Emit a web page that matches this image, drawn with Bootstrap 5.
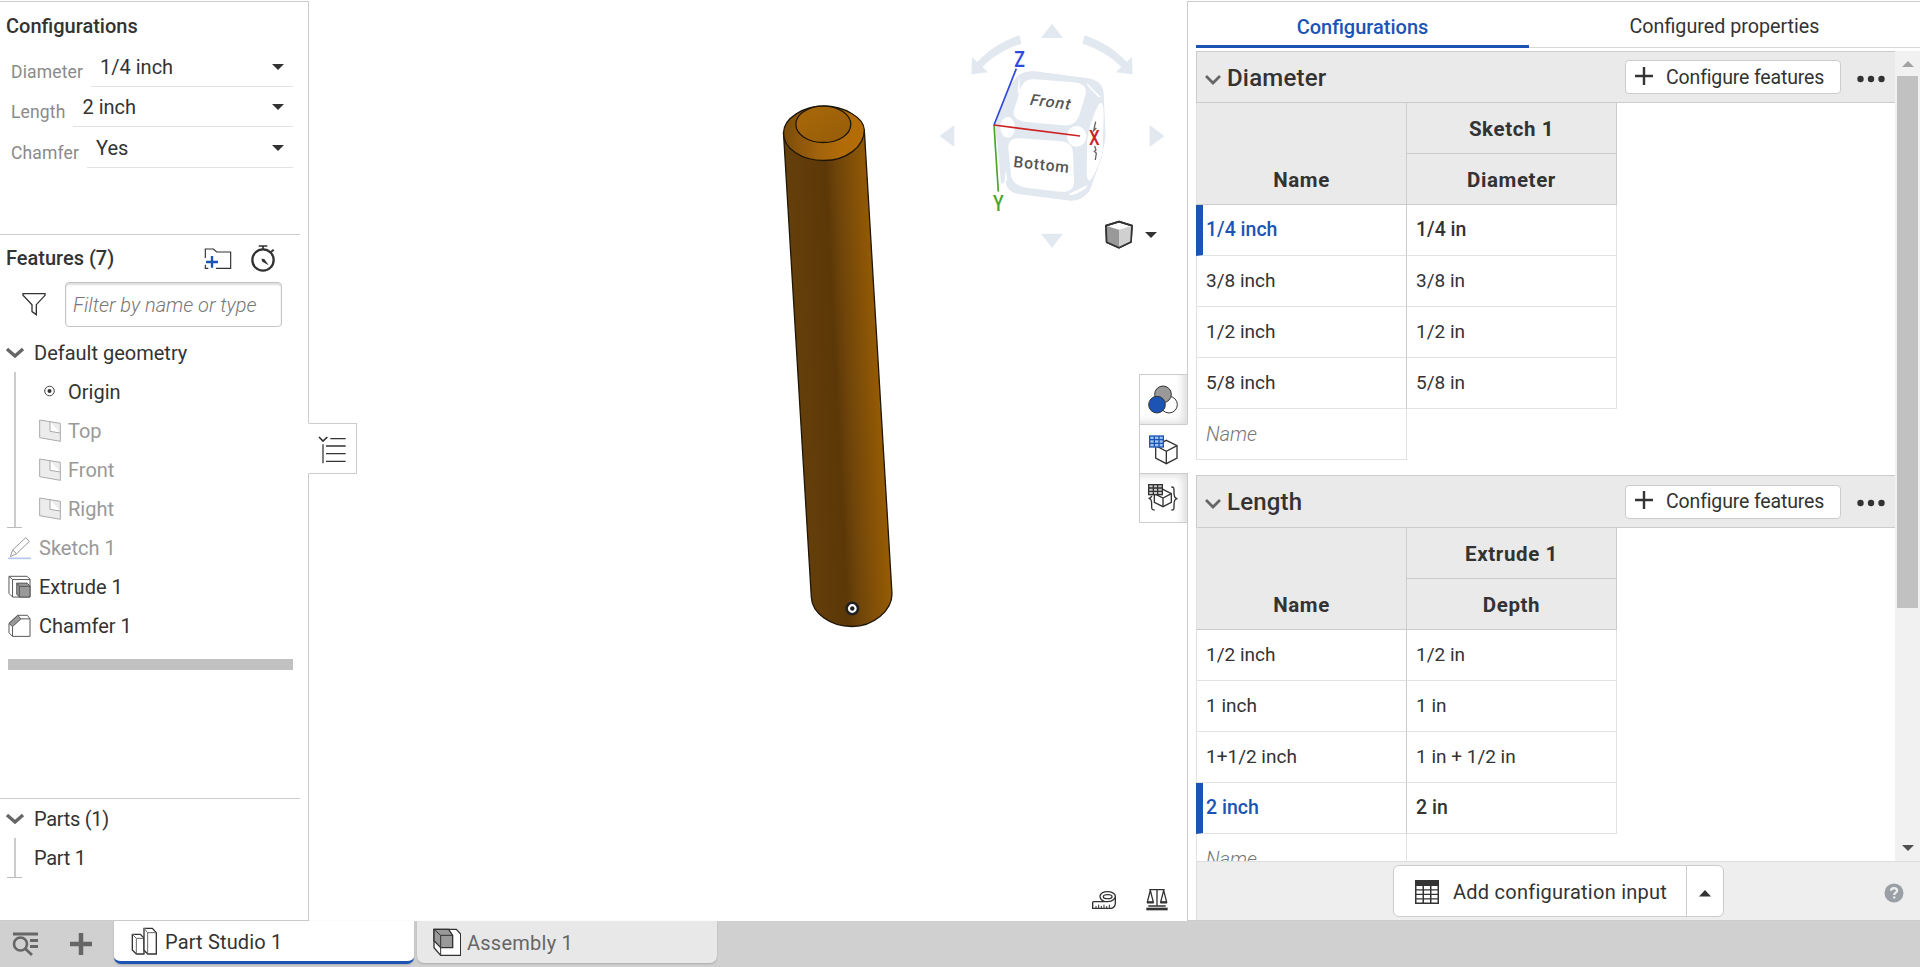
<!DOCTYPE html>
<html lang="en">
<head>
<meta charset="utf-8">
<title>Part Studio 1</title>
<link href="https://cdn.jsdelivr.net/npm/bootstrap@5.3.0/dist/css/bootstrap.min.css" rel="stylesheet">
<script src="https://cdn.jsdelivr.net/npm/bootstrap@5.3.0/dist/js/bootstrap.bundle.min.js"></script>
<style>
:root{--ink:#333;--line:#ccc;--soft:#e2e2e2;--blue:#1b54b5;--muted:#8a8a8a}
body{font-family:Roboto,"Noto Sans",sans-serif;font-size:20px;line-height:26px;color:var(--ink);letter-spacing:0;height:967px;overflow:hidden;background:#fff}
svg{display:block;flex:none}
.app-main{height:921px}
.side{width:309px;border:1px solid var(--line);border-left:0;margin-top:1px;height:920px}
.side .rule{width:300px;border-bottom:1px solid var(--line)}
.cfg-title{height:50px;padding:11px 0 0 6px;font-weight:500}
.cfg-row{padding-left:11px;width:293px}
.cfg-row label{font-size:17.5px;color:var(--muted);line-height:24px;padding-bottom:3px;margin-right:8px;letter-spacing:.15px}
.cfg-row .pick{border-bottom:1px solid var(--soft);padding:0 9px;line-height:24px;height:34px}
.pick span{padding-top:2px}
.caret{width:0;height:0;border:6px solid transparent;border-top-color:#333;border-bottom:0;margin-top:11px}
.feat-head{height:47px;padding-left:6px}
.feat-head .ttl{font-weight:500;width:198px;padding-bottom:2px}
.filter-box{width:217px;height:45px;border:1px solid #c4c4c4;border-radius:4px;box-shadow:inset 0 2px 2px #ddd;padding:9px 7px;font-style:italic;font-weight:300;color:#777;margin-left:19px}
.tree-row{height:39px;display:flex;align-items:center}
.tree-row.grp{padding-left:5px}
.tree-row.grp span{margin-left:9px}
.tree-row.feat{padding-left:8px}
.tree-row.feat span{margin-left:8px}
.tree-row.geo{padding-left:23px}
.tree-row.geo span{margin-left:7px}
.guide{width:2px;background:#ccc;position:relative}
.guide::after{content:"";position:absolute;left:-7px;bottom:0;width:15px;height:1px;background:#bbb}
.off{color:#999}
.rollbar{height:11px;background:#c1c1c1;margin:14px 15px 0 8px}
.stage{width:878px}
.flyout{position:absolute;left:-1px;top:423px;width:49px;height:51px;border:1px solid var(--line);border-left-color:#fff}
.rail{position:absolute;right:-1px;top:374px;width:49px}
.rail div{height:50px;border:1px solid var(--line);border-bottom:0}
.rail div.dim{background:#fff;box-shadow:inset -7px 0 8px -3px #ddd}
.rail div:first-child{box-shadow:inset -7px -5px 8px -3px #ddd}
.rail div:last-child{border-bottom:1px solid var(--line);box-shadow:inset -7px 5px 8px -3px #ddd}
.rail div.on{border-right-color:#fff;height:49px}
.panel{width:733px;margin-top:1px;border-top:1px solid var(--line);border-left:1px solid var(--line);border-bottom:1px solid var(--line);height:920px;padding-left:8px}
.ptab{height:46px;text-align:center;padding-top:12px;line-height:26px;border-bottom:1px solid #d8d8d8;font-size:19.7px}
.ptab.on{width:333px;color:var(--blue);font-weight:500;border-bottom:3px solid var(--blue);font-size:20px}
.scroller{height:810px;overflow:hidden}
.sec{height:52px;background:#eaeaea;border:1px solid var(--line);border-right:0;padding:0 10px 0 8px}
.sec.tall{height:53px;margin-top:15px}
.sec h2{font-size:24px;font-weight:500;line-height:28px;margin:1px 0 0 6px;letter-spacing:.2px}
.sec .chev{margin-top:5px}
.sec .dots{margin:3px 0 0 16px}
.addf{width:216px;height:34px;background:#fff;border:1px solid var(--line);border-radius:4px;padding:0 8px 0 9px;font-size:19.5px;letter-spacing:-.15px}
.addf svg{margin-bottom:3px}
.addf span{margin:1px 0 0 13px}
.grid{border-collapse:separate;border-spacing:0;table-layout:fixed;width:421px}
.grid th,.grid td{height:51px;padding:0 9px;border-right:1px solid var(--soft);border-bottom:1px solid var(--soft);vertical-align:middle;letter-spacing:0;font-size:19px}
.grid td{padding-bottom:1px}
.grid th{background:#eaeaea;border-color:var(--line);text-align:center;font-weight:700;font-size:20.5px;letter-spacing:.6px;padding-top:2px}
.grid th[rowspan]{vertical-align:bottom;padding-bottom:11px}
.grid tr>*:first-child{border-left:1px solid var(--soft)}
.grid tr:nth-child(2)>th{border-left:0}
.grid td:first-child{border-right-color:var(--line)}
.grid tr.sel td{font-weight:500;font-size:19.5px}
.grid tr.sel td:first-child{color:var(--blue);border-left:7px solid var(--blue);padding-left:3px}
.grid tr.blank td:first-child{font-style:italic;font-weight:300;color:#777;border-right-color:var(--soft);padding-top:2px;font-size:19.8px}
.grid tr.blank td:last-child{border:0}
.track{width:25px;background:#f1f1f1}
.thumb{width:21px;height:532px;background:#c1c1c1;margin-top:5px}
.foot{height:59px;background:#eee;border-top:1px solid #ddd;border-left:1px solid #ddd}
.split{width:331px;height:52px;border:1px solid var(--line);border-radius:6px;background:#fff;margin-left:196px}
.split .main-act{padding:2px 0 0 21px;border-right:1px solid #ccc;letter-spacing:.25px}
.split .main-act span{margin-left:14px}
.split .more{width:36px;padding-top:5px}
.tabs{height:46px;background:#d0d0d0;padding-left:12px}
.dtab{width:300px;height:43px;border-radius:0 0 7px 7px;box-shadow:0 1px 2px #aaa;letter-spacing:.15px}
.dtab span{margin-left:6px;padding-top:2px}
.dtab.on{background:#fff;border-bottom:3px solid var(--blue);margin-left:12px;padding-left:17px}
.dtab.idle{background:#e8e8e8;color:#666;margin-left:3px;height:42px;padding-left:16px;letter-spacing:.25px}
</style>
</head>
<body>
<div class="app-main d-flex">
  <aside class="side d-flex flex-column flex-shrink-0">
    <div class="cfg-title">Configurations</div>
    <div class="cfg-row d-flex align-items-end" style="height:35px"><label>Diameter</label><div class="pick flex-grow-1 d-flex justify-content-between"><span>1/4 inch</span><i class="caret"></i></div></div>
    <div class="cfg-row d-flex align-items-end" style="height:40px"><label>Length</label><div class="pick flex-grow-1 d-flex justify-content-between"><span>2 inch</span><i class="caret"></i></div></div>
    <div class="cfg-row d-flex align-items-end" style="height:41px"><label>Chamfer</label><div class="pick flex-grow-1 d-flex justify-content-between"><span>Yes</span><i class="caret"></i></div></div>
    <div class="rule" style="height:67px"></div>
    <div class="feat-head d-flex align-items-center">
      <span class="ttl">Features (7)</span>
      <svg width="28" height="24" viewBox="612 742 84 72" fill="none" stroke="#333" stroke-width="3.500"><path d="M616 775V748H640L650 757H692V806H648M616 795V806H625"/><path d="M636 769V804M618 787H654" stroke="#1b54b5" stroke-width="7"/></svg>
      <svg style="margin-left:18px" width="26" height="29" viewBox="750 733 78 87" fill="none" stroke="#333"><circle cx="789" cy="781" r="32" stroke-width="7"/><path d="M776 739H802M789 739V750" stroke-width="5"/><path d="M812 758L821 750" stroke-width="6"/><path d="M784 777L793 778L806 797L787 786Z" fill="#333" stroke="none"/></svg>
    </div>
    <div class="d-flex align-items-center" style="padding-left:22px">
      <svg width="24" height="25" viewBox="65 877 72 75" fill="none" stroke="#333" stroke-width="4"><path d="M68 882H134V887L108 915V945L95 936V915L68 887Z"/></svg>
      <div class="filter-box">Filter by name or type</div>
    </div>
    <div class="tree-row grp" style="margin-top:6px"><svg width="20" height="12" viewBox="0 0 20 12" fill="none" stroke="#666" stroke-width="3.400"><path d="M2 2L10 9L18 2"/></svg><span>Default geometry</span></div>
    <div class="d-flex" style="padding-left:14px">
      <div class="guide" style="height:156px"></div>
      <div>
        <div class="tree-row" style="padding-left:28px"><svg width="11" height="12" viewBox="0 0 11 12" style="margin-bottom:2px"><circle cx="5.500" cy="6" r="4.800" fill="none" stroke="#444"/><circle cx="5.500" cy="6" r="2" fill="#333"/></svg><span style="margin-left:13px">Origin</span></div>
        <div class="tree-row geo off"><svg width="22" height="23" viewBox="118 266 66 69" fill="#ececec" stroke="#aaa" stroke-width="3"><path d="M120 269L182 279V333L120 322ZM151 274V303L182 308"/></svg><span>Top</span></div>
        <div class="tree-row geo off"><svg width="22" height="23" viewBox="118 266 66 69" fill="#ececec" stroke="#aaa" stroke-width="3"><path d="M120 269L182 279V333L120 322ZM151 274V303L182 308"/></svg><span>Front</span></div>
        <div class="tree-row geo off"><svg width="22" height="23" viewBox="118 266 66 69" fill="#ececec" stroke="#aaa" stroke-width="3"><path d="M120 269L182 279V333L120 322ZM151 274V303L182 308"/></svg><span>Right</span></div>
      </div>
    </div>
    <div class="tree-row feat off"><svg width="23" height="24" viewBox="24 618 69 72" fill="none" stroke="#999" stroke-width="3"><path d="M24 685H93" stroke="#b5c8ea" stroke-width="5"/><path d="M31 680L38 660L77 623L88 634L50 671L31 680M38 660L50 671"/></svg><span>Sketch 1</span></div>
    <div class="tree-row feat"><svg width="23" height="24" viewBox="23 735 71 72" fill="none" stroke="#555" stroke-width="3"><path d="M26 738H82L91 747V802H37L26 791Z" fill="#fff"/><path d="M26 738L37 748V802M37 748H91"/><path d="M50 759H82L91 768V802H58L50 793Z" fill="#999"/><path d="M50 759L58 769H91M58 769V802"/></svg><span>Extrude 1</span></div>
    <div class="tree-row feat"><svg width="23" height="24" viewBox="23 851 71 72" fill="none" stroke="#555" stroke-width="3"><path d="M26 879L53 854H83L91 865V919H37L26 908Z" fill="#fff"/><path d="M26 879L53 854L63 865L37 889Z" fill="#999"/><path d="M63 865H91M37 889V919"/></svg><span>Chamfer 1</span></div>
    <div class="rollbar"></div>
    <div class="rule" style="height:129px"></div>
    <div class="tree-row grp"><svg width="20" height="12" viewBox="0 0 20 12" fill="none" stroke="#666" stroke-width="3.400"><path d="M2 2L10 9L18 2"/></svg><span style="letter-spacing:-.3px">Parts (1)</span></div>
    <div class="d-flex" style="padding-left:14px"><div class="guide" style="height:40px"></div><div class="tree-row" style="padding-left:18px"><span style="letter-spacing:-.3px">Part 1</span></div></div>
  </aside>

  <main class="stage position-relative flex-shrink-0">
    <svg width="878" height="921" viewBox="309 0 878 921">
      <defs>
        <linearGradient id="rod" gradientUnits="userSpaceOnUse" x1="797" y1="364" x2="878" y2="360"><stop offset="0" stop-color="#653f0a"/><stop offset=".47" stop-color="#5c3808"/><stop offset=".62" stop-color="#70450a"/><stop offset="1" stop-color="#955b04"/></linearGradient>
        <linearGradient id="bevel" x1="0" y1="0" x2="1" y2="0"><stop offset="0" stop-color="#7c4c0a"/><stop offset=".45" stop-color="#a3640c"/><stop offset=".7" stop-color="#b06b08"/><stop offset="1" stop-color="#b56d05"/></linearGradient>
        <linearGradient id="cap" x1="0" y1="0" x2="1" y2="1"><stop offset="0" stop-color="#a86908"/><stop offset="1" stop-color="#965c08"/></linearGradient>
      </defs>
      <g stroke="#1e1608" stroke-width="1.300">
        <path d="M783.500 133L811.300 597C812 613 830 626.500 852 626.500S892 610 892 594L864.300 130Z" fill="url(#rod)"/>
        <path d="M783.500 133C783.500 118 804 106 824 106S864.300 118 864.300 130C864.300 147 846 160.500 824 160.500S783.500 149 783.500 133Z" fill="url(#bevel)"/>
        <ellipse cx="823.300" cy="124.300" rx="27.500" ry="18.200" fill="url(#cap)"/>
      </g>
      <circle cx="852.300" cy="608.500" r="5.700" fill="#fff" stroke="#222" stroke-width="2.600"/><circle cx="852.300" cy="608.500" r="2.200" fill="#222"/>
      <g transform="translate(920 10) scale(.3333)">
        <g fill="#e2e8f0">
          <path d="M396 41L429 84H363Z"/><path d="M396 714L429 671H363Z"/><path d="M59 378L103 345V411Z"/><path d="M733 378L689 345V411Z"/>
          <path d="M298 76L305 101C262 114 215 141 188 171L204 187L154 193L156 141L172 156C205 120 250 92 298 76Z"/>
          <path d="M494 76L487 101C530 114 577 141 604 171L588 187L638 193L636 141L620 156C587 120 542 92 494 76Z"/>
          <path d="M290 200C300 190 320 182 345 184L500 204C535 209 550 225 551 250L557 380L546 440L510 540C495 562 475 573 450 572L300 553C272 548 258 535 258 515L243 521L232 400L222 345L262 240Z"/>
        </g>
        <g fill="#fff">
          <path d="M345 208L462 217C492 220 502 235 496 255L478 315C470 338 455 348 430 346L318 336C288 332 276 318 282 300L302 235C310 215 322 206 345 208Z"/>
          <path d="M300 385L425 394C448 398 458 408 459 430L462 515C462 538 445 548 420 545L320 533C290 528 275 515 273 495L265 415C264 395 275 383 300 385Z"/>
          <path d="M540 280C548 275 550 290 551 310L548 420C546 445 520 505 510 511C502 514 500 500 500 480L502 390C504 360 528 290 540 280Z"/>
          <ellipse cx="263" cy="352" rx="22" ry="31"/><ellipse cx="470" cy="379" rx="29" ry="31"/>
          <path d="M500 218L542 260L536 262L503 228ZM448 551L503 525C500 538 465 556 448 556Z"/>
          <path d="M297 190L300 245L293 250ZM258 480L262 510L252 522Z"/>
        </g>
        <g font-family="Roboto" fill="#555" font-size="47"><text transform="translate(326 284) rotate(7) skewX(-12)" font-weight="500" font-size="47" letter-spacing="3">Front</text><text transform="translate(279 471) rotate(6)" font-weight="500" letter-spacing="2.500">Bottom</text></g>
        <path d="M527 335L521 362L529 354M524 408L528 420L523 424L529 430L526 450" fill="none" stroke="#666" stroke-width="4"/>
        <path d="M222 345L289 176" stroke="#2f49e0" stroke-width="5"/><path d="M222 345L235 545" stroke="#4ba526" stroke-width="5"/><path d="M222 345L480 378" stroke="#cc2222" stroke-width="5"/>
        <g font-family="Roboto" font-size="64" text-anchor="middle" font-weight="500"><text x="299" y="170" fill="#2f49e0" textLength="32" lengthAdjust="spacingAndGlyphs">Z</text><text x="235" y="602" fill="#4ba526" textLength="32" lengthAdjust="spacingAndGlyphs">Y</text><text x="523" y="404" fill="#cc2222" font-size="58" textLength="32" lengthAdjust="spacingAndGlyphs">X</text></g>
        <g stroke="#333" stroke-width="5" stroke-linejoin="round"><path d="M597 635L636 647L633 696L597 713L560 697L558 647Z" fill="#fff"/><path d="M558 647L597 659V713L560 697Z" fill="#999" stroke="none"/><path d="M636 647L597 659V713L633 696Z" fill="#d0d0d0" stroke="none"/><path d="M597 635L636 647L633 696L597 713L560 697L558 647Z" fill="none"/></g>
        <path d="M675 666H711L693 684Z" fill="#333"/>
      </g>
      <g transform="translate(1080 855) scale(.3333)" fill="none" stroke="#333" stroke-width="4">
        <path d="M38 140V160H94C103 158 106 152 106 145V122M38 140H74C64 136 60 130 60 123C62 114 72 110 83 110S106 115 106 123S98 140 84 140H70"/><ellipse cx="83" cy="125" rx="13" ry="6"/><path d="M48 160V153M56 160V149M64 160V153M72 160V149M80 160V153M88 160V149" stroke-width="3"/>
        <path d="M208 104H254M231 104V152M211 106L202 141H220L211 106M251 106L242 141H260L251 106"/><path d="M199 162H263" stroke-width="8"/><path d="M201 143H221M241 143H261M205 153H257" stroke-width="5"/>
      </g>
    </svg>
    <div class="flyout bg-white"><svg width="47" height="49" viewBox="927 282 141 147" fill="none" stroke="#333" stroke-width="4"><path d="M957 321L969 333L982 321" stroke-width="5"/><path d="M969 343V400" stroke="#666" stroke-width="5"/><path d="M991 326H1037M978 348H1037M978 371H1037M978 394H1037"/></svg></div>
    <div class="rail bg-white">
      <div class="dim"><svg width="47" height="49" viewBox="120 46 141 147" stroke="#333" stroke-width="3"><circle cx="207" cy="135" r="25" fill="#fff"/><circle cx="189" cy="104" r="25" fill="#999"/><circle cx="171" cy="135" r="25" fill="#1b54b5"/></svg></div>
      <div class="on"><svg width="47" height="48" viewBox="120 194 141 144" fill="none" stroke="#333" stroke-width="4"><path d="M199 240L231 256V293L199 310L167 293V256Z"/><path d="M167 256L199 273L231 256M199 273V310"/><rect x="149" y="227" width="41" height="33" fill="#9cc4f5" stroke="#1b54b5"/><path d="M163 227V260M177 227V260M149 238H190M149 249H190" stroke="#1b54b5"/></svg></div>
      <div class="dim"><svg width="47" height="49" viewBox="120 343 141 147" fill="none" stroke="#333" stroke-width="4"><path d="M189 389L214 402V428L189 441L163 428V402Z"/><path d="M163 402L189 415L214 402M189 415V441"/><rect x="146" y="375" width="41" height="30" fill="#ccc"/><path d="M160 375V405M173 375V405M146 385H187M146 395H187"/><path d="M164 451C154 451 155 446 155 436C155 422 154 418 146 416C154 414 155 412 155 408M214 382C223 382 222 387 222 397C222 411 224 415 232 417C224 419 222 423 222 437C222 447 223 451 214 451"/></svg></div>
    </div>
  </main>

  <section class="panel flex-shrink-0">
    <div class="d-flex"><div class="ptab on">Configurations</div><div class="ptab flex-grow-1">Configured properties</div></div>
    <div class="d-flex" style="margin-top:3px">
      <div class="scroller flex-grow-1">
        <div class="sec d-flex align-items-center">
          <svg class="chev" width="16" height="10" viewBox="0 0 16 10" fill="none" stroke="#666" stroke-width="2.800"><path d="M1 1L8 8L15 1"/></svg><h2 class="flex-grow-1">Diameter</h2>
          <div class="addf d-flex align-items-center"><svg width="18" height="18" viewBox="0 0 18 18" stroke="#333" stroke-width="2.400"><path d="M9 0V18M0 9H18"/></svg><span>Configure features</span></div>
          <svg class="dots" width="28" height="8" viewBox="0 0 28 8" fill="#333"><circle cx="3.500" cy="4" r="3.200"/><circle cx="14" cy="4" r="3.200"/><circle cx="24.500" cy="4" r="3.200"/></svg>
        </div>
        <table class="grid"><colgroup><col style="width:211px"><col style="width:210px"></colgroup>
          <tr><th rowspan="2">Name</th><th>Sketch 1</th></tr><tr><th>Diameter</th></tr>
          <tr class="sel"><td>1/4 inch</td><td>1/4 in</td></tr><tr><td>3/8 inch</td><td>3/8 in</td></tr><tr><td>1/2 inch</td><td>1/2 in</td></tr><tr><td>5/8 inch</td><td>5/8 in</td></tr><tr class="blank"><td>Name</td><td></td></tr>
        </table>
        <div class="sec tall d-flex align-items-center">
          <svg class="chev" width="16" height="10" viewBox="0 0 16 10" fill="none" stroke="#666" stroke-width="2.800"><path d="M1 1L8 8L15 1"/></svg><h2 class="flex-grow-1">Length</h2>
          <div class="addf d-flex align-items-center"><svg width="18" height="18" viewBox="0 0 18 18" stroke="#333" stroke-width="2.400"><path d="M9 0V18M0 9H18"/></svg><span>Configure features</span></div>
          <svg class="dots" width="28" height="8" viewBox="0 0 28 8" fill="#333"><circle cx="3.500" cy="4" r="3.200"/><circle cx="14" cy="4" r="3.200"/><circle cx="24.500" cy="4" r="3.200"/></svg>
        </div>
        <table class="grid"><colgroup><col style="width:211px"><col style="width:210px"></colgroup>
          <tr><th rowspan="2">Name</th><th>Extrude 1</th></tr><tr><th>Depth</th></tr>
          <tr><td>1/2 inch</td><td>1/2 in</td></tr><tr><td>1 inch</td><td>1 in</td></tr><tr><td>1+1/2 inch</td><td>1 in + 1/2 in</td></tr><tr class="sel"><td>2 inch</td><td>2 in</td></tr><tr class="blank"><td>Name</td><td></td></tr>
        </table>
      </div>
      <div class="track d-flex flex-column align-items-center flex-shrink-0"><svg width="12" height="20" viewBox="0 0 12 20"><path d="M0 16L6 10L12 16Z" fill="#a3a3a3"/></svg><div class="thumb"></div><svg width="12" height="20" viewBox="0 0 12 20" class="mt-auto"><path d="M0 4H12L6 10Z" fill="#505050"/></svg></div>
    </div>
    <div class="foot d-flex align-items-center">
      <div class="split d-flex"><div class="main-act d-flex align-items-center flex-grow-1"><svg width="24" height="24" viewBox="0 0 24 24"><rect width="24" height="24" fill="#333"/><path d="M1.500 6h6v3.200h-6zM9 6h6v3.200H9zM16.500 6h6v3.200h-6zM1.500 10.500h6v3.200h-6zM9 10.500h6v3.200H9zM16.500 10.500h6v3.200h-6zM1.500 15h6v3.200h-6zM9 15h6v3.200H9zM16.500 15h6v3.200h-6zM1.500 19.500h6v3h-6zM9 19.500h6v3H9zM16.500 19.500h6v3h-6z" fill="#fff"/></svg><span>Add configuration input</span></div><div class="more d-flex align-items-center justify-content-center"><svg width="12" height="7" viewBox="0 0 12 7"><path d="M0 6.500H12L6 0Z" fill="#333"/></svg></div></div>
      <svg class="ms-auto" style="margin:3px 16px 0 0" width="20" height="20" viewBox="0 0 20 20"><circle cx="10" cy="10" r="9.500" fill="#9aa0a6"/><path d="M7 7.800C7 4.200 13.300 4.200 13.100 7.700C13 9.600 10.200 9.700 10.200 12M10.200 13.500V15.600" fill="none" stroke="#eee" stroke-width="2.300"/></svg>
    </div>
  </section>
</div>
<footer class="tabs d-flex">
  <svg width="90" height="46" viewBox="0 0 90 46" fill="none" stroke="#666"><path d="M1 13H26" stroke-width="3"/><circle cx="8.500" cy="23" r="6.500" stroke-width="2.600"/><path d="M13 27.500L20 34M18 19.500H26M18 25.500H26" stroke-width="2.800"/><path d="M69 12V34M58 23H80" stroke-width="4.500"/></svg>
  <div class="dtab on d-flex align-items-center"><svg width="28" height="29" viewBox="395 38 84 87" fill="#fff" stroke="#333" stroke-width="4"><path d="M399 60H423L434 71V119H411L399 107Z"/><path d="M399 60L411 72H434M411 72V119" stroke-width="3" stroke="#666"/><path d="M434 42H459L471 55V119H445L434 108Z"/><path d="M434 42L445 55H471M445 55V119" stroke-width="3" stroke="#666"/></svg><span>Part Studio 1</span></div>
  <div class="dtab idle d-flex align-items-center"><svg width="28" height="29" viewBox="1298 38 84 87" stroke="#333" stroke-width="4"><path d="M1301 42H1368L1381 56V120H1321L1301 97Z" fill="#fff"/><path d="M1301 42H1345L1357 60V97H1321L1301 76Z" fill="#999"/><path d="M1301 42L1321 60H1357M1321 60V120" fill="none" stroke-width="3"/></svg><span>Assembly 1</span></div>
</footer>
</body>
</html>
